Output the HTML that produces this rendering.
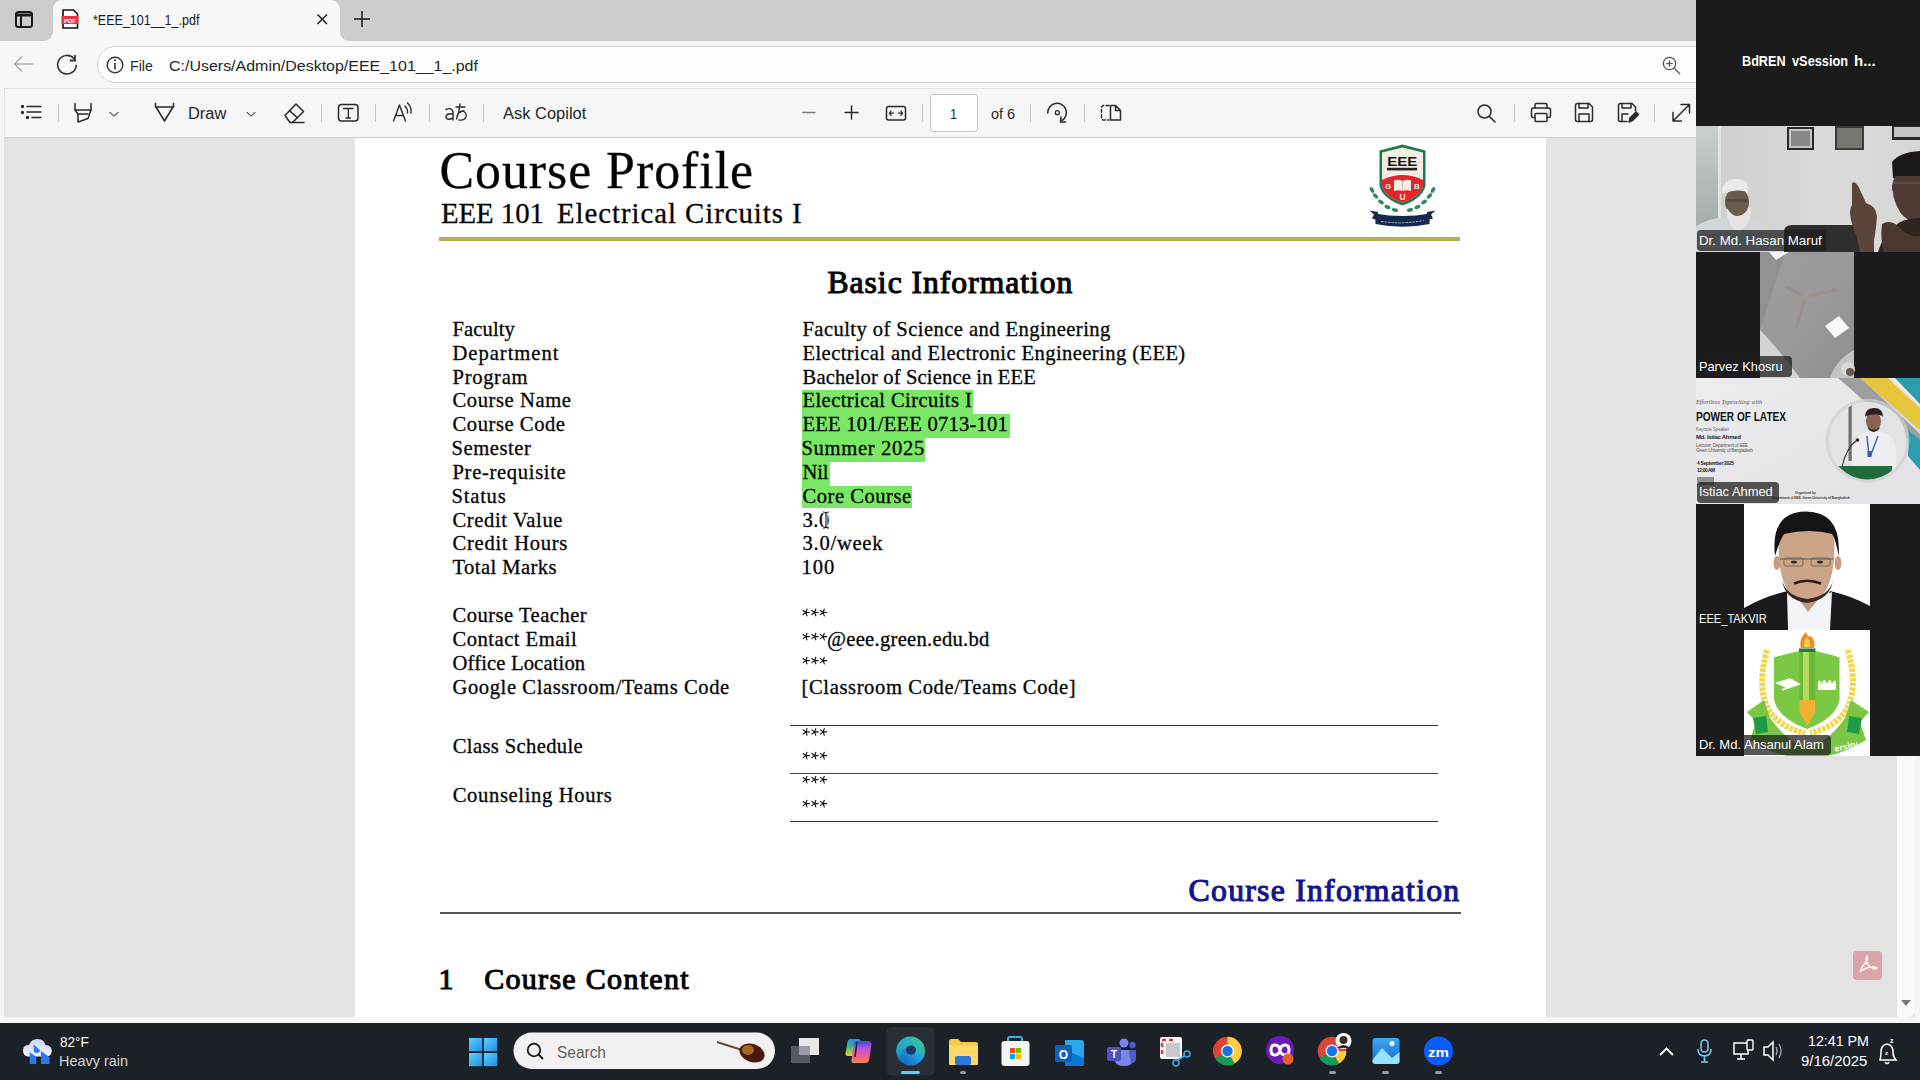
<!DOCTYPE html>
<html><head><meta charset="utf-8">
<style>
*{margin:0;padding:0;box-sizing:border-box}
html,body{width:1920px;height:1080px;overflow:hidden;background:#e3e3e3;font-family:"Liberation Sans",sans-serif}
.a{position:absolute}
.t{position:absolute;line-height:1;white-space:pre}
.ui{position:absolute;line-height:1;white-space:pre;font-family:"Liberation Sans",sans-serif;color:#1c1c1c}
svg{position:absolute;overflow:visible}
#tabbar{left:0;top:0;width:1920px;height:41px;background:#cdcdcd}
#tab{left:53px;top:0;width:287px;height:41px;background:#f7f7f7;border-radius:9px 9px 0 0}
#addr{left:0;top:41px;width:1920px;height:48px;background:#f7f7f7}
#pill{left:97px;top:46px;width:1640px;height:37px;background:#fdfdfd;border:1px solid #d4d4d4;border-radius:19px}
#tool{left:4px;top:88px;width:1916px;height:50px;background:#f6f6f6;border-top:1px solid #e4e4e4;border-left:1px solid #e4e4e4;border-bottom:1px solid #cfcfcf}
#page{left:355px;top:138px;width:1191px;height:879px;background:#fff}
#lframe{left:0;top:88px;width:4px;height:934px;background:#f4f4f4}
#bframe{left:0;top:1017px;width:1920px;height:6px;background:#f6f6f6}
#scroll{left:1897px;top:138px;width:18px;height:879px;background:#f8f8f8;border-radius:0 0 6px 0}
#rframe{left:1915px;top:88px;width:5px;height:934px;background:#f4f4f4}
#taskbar{left:0;top:1023px;width:1920px;height:57px;background:#1c2128}
#zoom{left:1696px;top:0;width:224px;height:756px;background:#1b1b1b}
.hl{position:absolute;background:#7ae866}
.sep{position:absolute;width:1px;height:18px;background:#c9c9c9}
</style></head><body>
<div id="tabbar" class="a"></div>
<div id="addr" class="a"></div>
<div id="pill" class="a"></div>
<div id="lframe" class="a"></div>
<div id="tool" class="a"></div>
<div id="page" class="a"></div>
<div id="scroll" class="a"></div>
<div id="rframe" class="a"></div>
<div id="bframe" class="a"></div>


<!-- tabstrip shapes -->
<div class="a" style="left:40px;top:28px;width:315px;height:13px;background:#f7f7f7"></div>
<div class="a" style="left:0;top:0;width:53px;height:41px;background:#cdcdcd;border-radius:0 0 9px 0"></div>
<div class="a" style="left:340px;top:0;width:1356px;height:41px;background:#cdcdcd;border-radius:0 0 0 9px"></div>
<div class="a" style="left:53px;top:0;width:287px;height:41px;background:#f7f7f7;border-radius:9px 9px 0 0"></div>
<svg class="chrome" width="1920" height="1080" style="left:0;top:0" viewBox="0 0 1920 1080">
 <g fill="none" stroke="#1a1a1a" stroke-width="2">
  <!-- tab actions -->
  <rect x="16" y="12" width="16" height="15" rx="2.5"/>
  <line x1="16" y1="15" x2="32" y2="15" stroke-width="3"/>
  <line x1="21" y1="15" x2="21" y2="27"/>
 </g>
 <!-- pdf file icon -->
 <path d="M63 10 H73.5 L77.5 14 V28 H63 Z" fill="#fff" stroke="#111" stroke-width="1.6"/>
 <rect x="61.5" y="16" width="17" height="8" fill="#e8353b"/>
 <text x="70" y="22.6" font-family="Liberation Sans" font-weight="700" font-size="6" fill="#fff" text-anchor="middle">PDF</text>
 <!-- close X -->
 <g stroke="#222" stroke-width="1.6" fill="none">
  <line x1="317.5" y1="14.5" x2="327" y2="24"/><line x1="327" y1="14.5" x2="317.5" y2="24"/>
 </g>
 <!-- plus -->
 <g stroke="#222" stroke-width="1.6" fill="none">
  <line x1="362" y1="11" x2="362" y2="27"/><line x1="354" y1="19" x2="370" y2="19"/>
 </g>
 <!-- back arrow -->
 <g stroke="#a8a8a8" stroke-width="1.4" fill="none">
  <line x1="14.5" y1="64" x2="33.5" y2="64"/><polyline points="22,56.5 14.5,64 22,71.5"/>
 </g>
 <!-- reload -->
 <g stroke="#333" stroke-width="1.6" fill="none">
  <path d="M76.3 64.7 A9.3 9.3 0 1 1 74.1 58.7"/>
  <polyline points="75,55 75,60.5 69.8,60.5" stroke-width="1.8"/>
 </g>
 <!-- info -->
 <circle cx="115" cy="65" r="7.8" fill="none" stroke="#333" stroke-width="1.4"/>
 <line x1="115" y1="63" x2="115" y2="69.5" stroke="#333" stroke-width="1.6"/>
 <circle cx="115" cy="60.3" r="1" fill="#333"/>
 <!-- zoom in address bar -->
 <g stroke="#555" stroke-width="1.3" fill="none">
  <circle cx="1669.5" cy="63.5" r="6.2"/><line x1="1674" y1="68" x2="1680" y2="74"/>
  <line x1="1669.5" y1="60.3" x2="1669.5" y2="66.7"/><line x1="1666.3" y1="63.5" x2="1672.7" y2="63.5"/>
 </g>
 <!-- toolbar icons -->
 <g stroke="#2a2a2a" stroke-width="1.5" fill="none" stroke-linecap="round" stroke-linejoin="round">
  <!-- list -->
  <circle cx="22.5" cy="106.5" r="0.9" fill="#2a2a2a"/><circle cx="22.5" cy="112.5" r="0.9" fill="#2a2a2a"/><circle cx="27.5" cy="117.5" r="0.9" fill="#2a2a2a"/>
  <line x1="27" y1="106.5" x2="41" y2="106.5"/><line x1="27" y1="112" x2="41" y2="112"/><line x1="32" y1="117.5" x2="41" y2="117.5"/>
  <!-- highlighter -->
  <path d="M75 103.5 V110 H91 V103.5"/><path d="M75 110 L78 114 V122 L88 118.5 L91 110"/><line x1="78" y1="114" x2="88" y2="114"/>
  <polyline points="110,112.5 114,116 118,112.5" stroke="#666" stroke-width="1.2"/>
  <!-- draw pen -->
  <path d="M155.5 103.5 V107 H173.5 V103.5"/><path d="M156 107 L164.5 121 L173 107"/>
  <polyline points="247,112.5 251,116 255,112.5" stroke="#666" stroke-width="1.2"/>
  <!-- eraser -->
  <path d="M285 115.5 L296 104 L303.5 111.5 L292.5 122.5 H290 Z"/><line x1="289.5" y1="110.5" x2="297.5" y2="118"/><line x1="292" y1="122.5" x2="304" y2="122.5"/>
  <!-- T box -->
  <rect x="338.5" y="104.5" width="19.5" height="16.5" rx="3"/>
  <path d="M343.5 108.5 H353 M348.3 108.5 V118 M346 118 H350.5" stroke-width="1.3"/>
  <!-- read aloud -->
  <path d="M393.5 121 L399.5 105 L405.5 121 M395.8 115.5 H403.2" stroke-width="1.4"/>
  <path d="M405 106 Q408 109 407.5 113" stroke-width="1.3"/><path d="M407.5 103 Q412 107.5 411 113" stroke-width="1.3"/>
  <!-- translate -->
  <path d="M446 109.5 Q452 107 453 112 V120 M453 114 Q446 113 446 117 Q447 121 453 118" stroke-width="1.4"/>
  <path d="M456 107 H465 M460 104 Q459 113 456.5 119 M463 111 Q467 113 466 117 Q464 121 459 120 M457 116 Q459 111 464 111" stroke-width="1.3"/>
  <!-- minus -->
  <line x1="803" y1="112.5" x2="815" y2="112.5" stroke="#777"/>
  <!-- plus -->
  <line x1="845" y1="112.5" x2="858" y2="112.5"/><line x1="851.5" y1="106" x2="851.5" y2="119"/>
  <!-- fit width -->
  <rect x="886.5" y="106.5" width="19" height="13.5" rx="2"/>
  <path d="M889.5 113.2 H893.5 M891 111 L889.5 113.2 L891 115.4 M898.5 113.2 H902.5 M901 111 L902.5 113.2 L901 115.4" stroke-width="1.3"/>
  <!-- rotate -->
  <path d="M1047.8 113 A9.3 9.3 0 1 1 1062 120.5" stroke-width="1.5"/>
  <path d="M1061 117 L1060.5 122 L1065.5 122" stroke-width="1.6"/>
  <circle cx="1057.3" cy="112.7" r="2" stroke-width="1.3"/>
  <!-- two page -->
  <path d="M1109 105.5 H1104 Q1101.5 105.5 1101.5 108 V117.5 Q1101.5 120 1104 120 H1109" stroke-dasharray="3 2.2" stroke-width="1.4"/>
  <path d="M1110.5 105.5 H1115.5 L1120.5 110.5 V120 H1110.5 Z M1115.5 105.5 V110.5 H1120.5" stroke-width="1.5"/>
  <!-- search -->
  <circle cx="1484.5" cy="111.5" r="6.5"/><line x1="1489.5" y1="116.5" x2="1495" y2="122"/>
  <!-- print -->
  <path d="M1535 108 V105 Q1535 103.5 1536.5 103.5 H1545.5 Q1547 103.5 1547 105 V108"/>
  <path d="M1535 117.5 H1533.5 Q1531.5 117.5 1531.5 115.5 V110 Q1531.5 108 1533.5 108 H1548.5 Q1550.5 108 1550.5 110 V115.5 Q1550.5 117.5 1548.5 117.5 H1547"/>
  <rect x="1535" y="113.5" width="12" height="8" rx="1"/>
  <!-- save -->
  <path d="M1575.5 105.5 Q1575.5 103.5 1577.5 103.5 H1589 L1592.5 107 V119.5 Q1592.5 121.5 1590.5 121.5 H1577.5 Q1575.5 121.5 1575.5 119.5 Z"/>
  <path d="M1579 103.5 V108 H1588 V103.5 M1579 121.5 V114 H1589 V121.5"/>
  <!-- save as -->
  <path d="M1627 121.5 H1620.5 Q1618.5 121.5 1618.5 119.5 V105.5 Q1618.5 103.5 1620.5 103.5 H1632 L1635.5 107 V111"/>
  <path d="M1622 103.5 V108 H1631 V103.5 M1622 121.5 V114 H1628"/>
  <path d="M1629 122 L1630 118 L1636 112 L1638.5 114.5 L1632.5 120.5 Z" fill="#2a2a2a"/>
  <!-- fullscreen -->
  <path d="M1673 121 L1689.5 104.5 M1681 104.5 H1689.5 V113 M1673 112.5 V121 H1681.5"/>
 </g>
 <!-- separators -->
 <g stroke="#c6c6c6" stroke-width="1">
  <line x1="58.5" y1="104" x2="58.5" y2="122"/><line x1="321.5" y1="104" x2="321.5" y2="122"/>
  <line x1="375.5" y1="104" x2="375.5" y2="122"/><line x1="429.5" y1="104" x2="429.5" y2="122"/>
  <line x1="483.5" y1="104" x2="483.5" y2="122"/><line x1="922.5" y1="104" x2="922.5" y2="122"/>
  <line x1="1030.5" y1="104" x2="1030.5" y2="122"/><line x1="1084.5" y1="104" x2="1084.5" y2="122"/>
  <line x1="1514.5" y1="104" x2="1514.5" y2="122"/><line x1="1654.5" y1="104" x2="1654.5" y2="122"/>
 </g>
</svg>
<!-- page number box -->
<div class="a" style="left:930px;top:94px;width:48px;height:38px;background:#fff;border:1px solid #c9c9c9;border-radius:3px"></div>
<div class="t" style="left:92.5px;top:11.5px;font:400 15.2px 'Liberation Sans',sans-serif;line-height:1;transform:scaleX(0.8232);transform-origin:0 0;color:#1a1a1a">*EEE_101__1_.pdf</div>
<div class="t" style="left:129.6px;top:57.5px;font:400 15.2px 'Liberation Sans',sans-serif;line-height:1;transform:scaleX(0.9337);transform-origin:0 0;color:#2b2b2b">File</div>
<div class="t" style="left:169.3px;top:57.5px;font:400 15.4px 'Liberation Sans',sans-serif;line-height:1;transform:scaleX(1.0377);transform-origin:0 0;color:#262626">C:/Users/Admin/Desktop/EEE_101__1_.pdf</div>
<div class="t" style="left:187.9px;top:105.8px;font:400 15.6px 'Liberation Sans',sans-serif;line-height:1;transform:scaleX(1.0519);transform-origin:0 0;color:#262626">Draw</div>
<div class="t" style="left:503.0px;top:105.8px;font:400 15.6px 'Liberation Sans',sans-serif;line-height:1;transform:scaleX(1.0561);transform-origin:0 0;color:#262626">Ask Copilot</div>
<div class="t" style="left:950.1px;top:106.6px;font:400 14.6px 'Liberation Sans',sans-serif;line-height:1;transform:scaleX(0.8571);transform-origin:0 0;color:#262626">1</div>
<div class="t" style="left:991.0px;top:106.6px;font:400 14.6px 'Liberation Sans',sans-serif;line-height:1;transform:scaleX(0.9907);transform-origin:0 0;color:#262626">of 6</div>

<!-- highlights -->
<div class="hl" style="left:802px;top:390px;width:171px;height:24px"></div>
<div class="hl" style="left:802px;top:414px;width:208px;height:24px"></div>
<div class="hl" style="left:802px;top:438px;width:123px;height:24px"></div>
<div class="hl" style="left:802px;top:462px;width:28px;height:24px"></div>
<div class="hl" style="left:802px;top:486px;width:110px;height:22px"></div>

<!-- page lines -->
<div class="a" style="left:439px;top:237px;width:1021px;height:4px;background:#b9ad55"></div>
<div class="a" style="left:790px;top:725px;width:648px;height:1.3px;background:#333"></div>
<div class="a" style="left:790px;top:772.5px;width:648px;height:1px;background:#444"></div>
<div class="a" style="left:790px;top:820.5px;width:648px;height:1.3px;background:#333"></div>
<div class="a" style="left:440px;top:912px;width:1021px;height:1.5px;background:#555"></div>

<div class="t" style="left:439.5px;top:145.1px;font:400 51.8px 'Liberation Serif',serif;line-height:1;letter-spacing:0.99px;color:#050505;-webkit-text-stroke:0.3px #050505">Course Profile</div>
<div class="t" style="left:441.0px;top:198.8px;font:400 28.8px 'Liberation Serif',serif;line-height:1;letter-spacing:-0.04px;color:#050505;-webkit-text-stroke:0.3px #050505">EEE 101</div>
<div class="t" style="left:557.0px;top:198.8px;font:400 28.8px 'Liberation Serif',serif;line-height:1;letter-spacing:0.96px;color:#050505;-webkit-text-stroke:0.3px #050505">Electrical Circuits I</div>
<div class="t" style="left:827.5px;top:266.8px;font:401 31.6px 'Liberation Serif',serif;line-height:1;letter-spacing:0.99px;color:#050505;-webkit-text-stroke:1.1px #050505">Basic Information</div>
<div class="t" style="left:452.5px;top:318.8px;font:400 20.6px 'Liberation Serif',serif;line-height:1;letter-spacing:0.09px;color:#050505;-webkit-text-stroke:0.3px #050505">Faculty</div>
<div class="t" style="left:452.5px;top:342.6px;font:400 20.6px 'Liberation Serif',serif;line-height:1;letter-spacing:0.97px;color:#050505;-webkit-text-stroke:0.3px #050505">Department</div>
<div class="t" style="left:452.5px;top:366.5px;font:400 20.6px 'Liberation Serif',serif;line-height:1;letter-spacing:0.68px;color:#050505;-webkit-text-stroke:0.3px #050505">Program</div>
<div class="t" style="left:452.5px;top:390.3px;font:400 20.6px 'Liberation Serif',serif;line-height:1;letter-spacing:0.57px;color:#050505;-webkit-text-stroke:0.3px #050505">Course Name</div>
<div class="t" style="left:452.5px;top:414.2px;font:400 20.6px 'Liberation Serif',serif;line-height:1;letter-spacing:0.55px;color:#050505;-webkit-text-stroke:0.3px #050505">Course Code</div>
<div class="t" style="left:451.5px;top:438.0px;font:400 20.6px 'Liberation Serif',serif;line-height:1;letter-spacing:0.55px;color:#050505;-webkit-text-stroke:0.3px #050505">Semester</div>
<div class="t" style="left:452.5px;top:461.9px;font:400 20.6px 'Liberation Serif',serif;line-height:1;letter-spacing:0.67px;color:#050505;-webkit-text-stroke:0.3px #050505">Pre-requisite</div>
<div class="t" style="left:451.5px;top:485.7px;font:400 20.6px 'Liberation Serif',serif;line-height:1;letter-spacing:0.77px;color:#050505;-webkit-text-stroke:0.3px #050505">Status</div>
<div class="t" style="left:452.5px;top:509.6px;font:400 20.6px 'Liberation Serif',serif;line-height:1;letter-spacing:0.62px;color:#050505;-webkit-text-stroke:0.3px #050505">Credit Value</div>
<div class="t" style="left:452.5px;top:533.4px;font:400 20.6px 'Liberation Serif',serif;line-height:1;letter-spacing:0.72px;color:#050505;-webkit-text-stroke:0.3px #050505">Credit Hours</div>
<div class="t" style="left:452.5px;top:557.3px;font:400 20.6px 'Liberation Serif',serif;line-height:1;letter-spacing:0.42px;color:#050505;-webkit-text-stroke:0.3px #050505">Total Marks</div>
<div class="t" style="left:802.5px;top:318.8px;font:400 20.6px 'Liberation Serif',serif;line-height:1;letter-spacing:0.42px;color:#050505;-webkit-text-stroke:0.3px #050505">Faculty of Science and Engineering</div>
<div class="t" style="left:802.5px;top:342.6px;font:400 20.6px 'Liberation Serif',serif;line-height:1;letter-spacing:0.40px;color:#050505;-webkit-text-stroke:0.3px #050505">Electrical and Electronic Engineering (EEE)</div>
<div class="t" style="left:802.5px;top:366.5px;font:400 20.6px 'Liberation Serif',serif;line-height:1;letter-spacing:0.14px;color:#050505;-webkit-text-stroke:0.3px #050505">Bachelor of Science in EEE</div>
<div class="t" style="left:802.5px;top:390.3px;font:400 20.6px 'Liberation Serif',serif;line-height:1;letter-spacing:0.40px;color:#050505;-webkit-text-stroke:0.3px #050505">Electrical Circuits I</div>
<div class="t" style="left:802.5px;top:414.2px;font:400 20.6px 'Liberation Serif',serif;line-height:1;letter-spacing:0.21px;color:#050505;-webkit-text-stroke:0.3px #050505">EEE 101/EEE 0713-101</div>
<div class="t" style="left:801.5px;top:438.0px;font:400 20.6px 'Liberation Serif',serif;line-height:1;letter-spacing:0.67px;color:#050505;-webkit-text-stroke:0.3px #050505">Summer 2025</div>
<div class="t" style="left:802.5px;top:461.9px;font:400 20.6px 'Liberation Serif',serif;line-height:1;letter-spacing:-0.20px;color:#050505;-webkit-text-stroke:0.3px #050505">Nil</div>
<div class="t" style="left:802.5px;top:485.7px;font:400 20.6px 'Liberation Serif',serif;line-height:1;letter-spacing:0.51px;color:#050505;-webkit-text-stroke:0.3px #050505">Core Course</div>
<div class="t" style="left:802.5px;top:509.6px;font:400 20.6px 'Liberation Serif',serif;line-height:1;letter-spacing:0.53px;color:#050505;-webkit-text-stroke:0.3px #050505">3.0</div>
<div class="t" style="left:802.5px;top:533.4px;font:400 20.6px 'Liberation Serif',serif;line-height:1;letter-spacing:0.73px;color:#050505;-webkit-text-stroke:0.3px #050505">3.0/week</div>
<div class="t" style="left:801.5px;top:557.3px;font:400 20.6px 'Liberation Serif',serif;line-height:1;letter-spacing:0.95px;color:#050505;-webkit-text-stroke:0.3px #050505">100</div>
<div class="t" style="left:452.5px;top:605.0px;font:400 20.6px 'Liberation Serif',serif;line-height:1;letter-spacing:0.48px;color:#050505;-webkit-text-stroke:0.3px #050505">Course Teacher</div>
<div class="t" style="left:452.5px;top:628.8px;font:400 20.6px 'Liberation Serif',serif;line-height:1;letter-spacing:0.49px;color:#050505;-webkit-text-stroke:0.3px #050505">Contact Email</div>
<div class="t" style="left:452.5px;top:652.7px;font:400 20.6px 'Liberation Serif',serif;line-height:1;letter-spacing:0.15px;color:#050505;-webkit-text-stroke:0.3px #050505">Office Location</div>
<div class="t" style="left:452.5px;top:676.5px;font:400 20.6px 'Liberation Serif',serif;line-height:1;letter-spacing:0.58px;color:#050505;-webkit-text-stroke:0.3px #050505">Google Classroom/Teams Code</div>
<div class="t" style="left:827.0px;top:628.8px;font:400 20.6px 'Liberation Serif',serif;line-height:1;letter-spacing:0.28px;color:#050505;-webkit-text-stroke:0.3px #050505">@eee.green.edu.bd</div>
<div class="t" style="left:801.5px;top:676.5px;font:400 20.6px 'Liberation Serif',serif;line-height:1;letter-spacing:0.61px;color:#050505;-webkit-text-stroke:0.3px #050505">[Classroom Code/Teams Code]</div>
<div class="t" style="left:452.7px;top:736.4px;font:400 20.6px 'Liberation Serif',serif;line-height:1;letter-spacing:0.37px;color:#050505;-webkit-text-stroke:0.3px #050505">Class Schedule</div>
<div class="t" style="left:452.7px;top:784.5px;font:400 20.6px 'Liberation Serif',serif;line-height:1;letter-spacing:0.65px;color:#050505;-webkit-text-stroke:0.3px #050505">Counseling Hours</div>
<div class="t" style="left:1188.6px;top:874.9px;font:401 31.8px 'Liberation Serif',serif;line-height:1;letter-spacing:1.22px;color:#14148c;-webkit-text-stroke:1.1px #14148c">Course Information</div>
<div class="t" style="left:438.6px;top:964.2px;font:401 30px 'Liberation Serif',serif;line-height:1;letter-spacing:0.00px;color:#050505;-webkit-text-stroke:1.1px #050505">1</div>
<div class="t" style="left:484.2px;top:964.2px;font:401 30px 'Liberation Serif',serif;line-height:1;letter-spacing:1.30px;color:#050505;-webkit-text-stroke:1.1px #050505">Course Content</div><svg width="1920" height="1080" style="left:0;top:0" viewBox="0 0 1920 1080"><path d="M805.90 612.50 L809.40 612.50 M805.90 612.50 L806.98 615.83 M805.90 612.50 L803.07 614.56 M805.90 612.50 L803.07 610.44 M805.90 612.50 L806.98 609.17 M814.70 612.50 L818.20 612.50 M814.70 612.50 L815.78 615.83 M814.70 612.50 L811.87 614.56 M814.70 612.50 L811.87 610.44 M814.70 612.50 L815.78 609.17 M823.20 612.50 L826.70 612.50 M823.20 612.50 L824.28 615.83 M823.20 612.50 L820.37 614.56 M823.20 612.50 L820.37 610.44 M823.20 612.50 L824.28 609.17 M805.90 636.60 L809.40 636.60 M805.90 636.60 L806.98 639.93 M805.90 636.60 L803.07 638.66 M805.90 636.60 L803.07 634.54 M805.90 636.60 L806.98 633.27 M814.70 636.60 L818.20 636.60 M814.70 636.60 L815.78 639.93 M814.70 636.60 L811.87 638.66 M814.70 636.60 L811.87 634.54 M814.70 636.60 L815.78 633.27 M823.20 636.60 L826.70 636.60 M823.20 636.60 L824.28 639.93 M823.20 636.60 L820.37 638.66 M823.20 636.60 L820.37 634.54 M823.20 636.60 L824.28 633.27 M805.90 660.60 L809.40 660.60 M805.90 660.60 L806.98 663.93 M805.90 660.60 L803.07 662.66 M805.90 660.60 L803.07 658.54 M805.90 660.60 L806.98 657.27 M814.70 660.60 L818.20 660.60 M814.70 660.60 L815.78 663.93 M814.70 660.60 L811.87 662.66 M814.70 660.60 L811.87 658.54 M814.70 660.60 L815.78 657.27 M823.20 660.60 L826.70 660.60 M823.20 660.60 L824.28 663.93 M823.20 660.60 L820.37 662.66 M823.20 660.60 L820.37 658.54 M823.20 660.60 L824.28 657.27 M805.90 731.90 L809.40 731.90 M805.90 731.90 L806.98 735.23 M805.90 731.90 L803.07 733.96 M805.90 731.90 L803.07 729.84 M805.90 731.90 L806.98 728.57 M814.70 731.90 L818.20 731.90 M814.70 731.90 L815.78 735.23 M814.70 731.90 L811.87 733.96 M814.70 731.90 L811.87 729.84 M814.70 731.90 L815.78 728.57 M823.20 731.90 L826.70 731.90 M823.20 731.90 L824.28 735.23 M823.20 731.90 L820.37 733.96 M823.20 731.90 L820.37 729.84 M823.20 731.90 L824.28 728.57 M805.90 755.60 L809.40 755.60 M805.90 755.60 L806.98 758.93 M805.90 755.60 L803.07 757.66 M805.90 755.60 L803.07 753.54 M805.90 755.60 L806.98 752.27 M814.70 755.60 L818.20 755.60 M814.70 755.60 L815.78 758.93 M814.70 755.60 L811.87 757.66 M814.70 755.60 L811.87 753.54 M814.70 755.60 L815.78 752.27 M823.20 755.60 L826.70 755.60 M823.20 755.60 L824.28 758.93 M823.20 755.60 L820.37 757.66 M823.20 755.60 L820.37 753.54 M823.20 755.60 L824.28 752.27 M805.90 779.60 L809.40 779.60 M805.90 779.60 L806.98 782.93 M805.90 779.60 L803.07 781.66 M805.90 779.60 L803.07 777.54 M805.90 779.60 L806.98 776.27 M814.70 779.60 L818.20 779.60 M814.70 779.60 L815.78 782.93 M814.70 779.60 L811.87 781.66 M814.70 779.60 L811.87 777.54 M814.70 779.60 L815.78 776.27 M823.20 779.60 L826.70 779.60 M823.20 779.60 L824.28 782.93 M823.20 779.60 L820.37 781.66 M823.20 779.60 L820.37 777.54 M823.20 779.60 L824.28 776.27 M805.90 803.60 L809.40 803.60 M805.90 803.60 L806.98 806.93 M805.90 803.60 L803.07 805.66 M805.90 803.60 L803.07 801.54 M805.90 803.60 L806.98 800.27 M814.70 803.60 L818.20 803.60 M814.70 803.60 L815.78 806.93 M814.70 803.60 L811.87 805.66 M814.70 803.60 L811.87 801.54 M814.70 803.60 L815.78 800.27 M823.20 803.60 L826.70 803.60 M823.20 803.60 L824.28 806.93 M823.20 803.60 L820.37 805.66 M823.20 803.60 L820.37 801.54 M823.20 803.60 L824.28 800.27 " stroke="#111" stroke-width="1.15" stroke-linecap="round" fill="none"/></svg>


<!-- EEE logo -->
<svg width="86" height="94" style="left:1360px;top:138px" viewBox="1360 138 86 94">
 <path d="M1402.5 144.5 L1425.5 150.5 V186 Q1422 199 1402.5 205.5 Q1383 199 1379.5 186 V150.5 Z" fill="#1f7a4a"/>
 <path d="M1402.5 147.5 L1423 152.5 V185.5 Q1420 197 1402.5 202.5 Q1385 197 1382 185.5 V152.5 Z" fill="#f1ede2"/>
 <path d="M1382 180 Q1402.5 170 1423 180 V185.5 Q1420 197 1402.5 202.5 Q1385 197 1382 185.5 Z" fill="#e3262b"/>
 <text x="1402.3" y="166" font-family="Liberation Sans" font-weight="900" font-size="13.5" fill="#111" text-anchor="middle" textLength="30" lengthAdjust="spacingAndGlyphs">EEE</text>
 <rect x="1387" y="167.8" width="30" height="2.6" fill="#222"/>
 <path d="M1394 180.5 Q1398 179 1402.5 181 Q1407 179 1411 180.5 V191 Q1407 189.5 1402.5 191 Q1398 189.5 1394 191 Z" fill="#f4efe4"/>
 <line x1="1402.5" y1="181" x2="1402.5" y2="191" stroke="#c88" stroke-width="0.6"/>
 <text x="1388" y="188.5" font-family="Liberation Sans" font-weight="700" font-size="8" fill="#f4e8e0" text-anchor="middle">G</text>
 <text x="1416.8" y="188.5" font-family="Liberation Sans" font-weight="700" font-size="8" fill="#f4e8e0" text-anchor="middle">B</text>
 <text x="1402.5" y="199.5" font-family="Liberation Sans" font-weight="700" font-size="8.5" fill="#f4e8e0" text-anchor="middle">U</text>
 <g fill="#2e8a5a">
  <ellipse cx="1372" cy="190" rx="1.8" ry="3.2" transform="rotate(-30 1372 190)"/>
  <ellipse cx="1375.5" cy="196" rx="1.8" ry="3.2" transform="rotate(-45 1375.5 196)"/>
  <ellipse cx="1381" cy="202" rx="1.8" ry="3.2" transform="rotate(-55 1381 202)"/>
  <ellipse cx="1387.5" cy="207" rx="1.8" ry="3.2" transform="rotate(-65 1387.5 207)"/>
  <ellipse cx="1395" cy="210" rx="1.8" ry="3.2" transform="rotate(-75 1395 210)"/>
  <ellipse cx="1433" cy="190" rx="1.8" ry="3.2" transform="rotate(30 1433 190)"/>
  <ellipse cx="1429.5" cy="196" rx="1.8" ry="3.2" transform="rotate(45 1429.5 196)"/>
  <ellipse cx="1424" cy="202" rx="1.8" ry="3.2" transform="rotate(55 1424 202)"/>
  <ellipse cx="1417.5" cy="207" rx="1.8" ry="3.2" transform="rotate(65 1417.5 207)"/>
  <ellipse cx="1410" cy="210" rx="1.8" ry="3.2" transform="rotate(75 1410 210)"/>
 </g>
 <path d="M1369.5 210.5 L1378 212 L1377.5 220 L1372 218.5 L1374 214.5 Z M1435.5 210.5 L1427 212 L1427.5 220 L1433 218.5 L1431 214.5 Z" fill="#13284a"/>
 <path d="M1375 213.5 Q1402.5 218.5 1430 213.5 L1429.5 224 Q1402.5 229.5 1375.5 224 Z" fill="#14294b"/>
 <path d="M1381 221.5 Q1402 224.5 1424 220.5" stroke="#b8c2d2" stroke-width="0.9" fill="none" stroke-dasharray="2.5 1"/>
</svg>
<!-- text cursor -->
<svg width="12" height="20" style="left:820px;top:510px" viewBox="0 0 12 20">
 <path d="M3 2 Q6 2 6 4 V16 Q6 18 3 18 M9 2 Q6 2 6 4 M9 18 Q6 18 6 16" fill="none" stroke="#fff" stroke-width="3"/>
 <path d="M3 2 Q6 2 6 4 V16 Q6 18 3 18 M9 2 Q6 2 6 4 M9 18 Q6 18 6 16" fill="none" stroke="#111" stroke-width="1.1"/>
</svg>

<div id="taskbar" class="a"></div>

<svg width="1920" height="57" style="left:0;top:1023px" viewBox="0 1023 1920 57">
 <defs>
  <linearGradient id="winlogo" x1="0" y1="0" x2="1" y2="1"><stop offset="0" stop-color="#5fd0ff"/><stop offset="1" stop-color="#1a8ee6"/></linearGradient>
  <linearGradient id="edgeg" x1="1" y1="0" x2="0" y2="1"><stop offset="0" stop-color="#50d060"/><stop offset="0.45" stop-color="#20a0e0"/><stop offset="1" stop-color="#1050b0"/></linearGradient>
  <linearGradient id="copg" x1="0" y1="0" x2="1" y2="1"><stop offset="0" stop-color="#2ec0f0"/><stop offset="0.35" stop-color="#f0d040"/><stop offset="0.65" stop-color="#e8508a"/><stop offset="1" stop-color="#9a50e0"/></linearGradient>
  <linearGradient id="photog" x1="0" y1="0" x2="0" y2="1"><stop offset="0" stop-color="#3aa8f0"/><stop offset="1" stop-color="#1a6ad0"/></linearGradient>
  <linearGradient id="cloudg" x1="0" y1="0" x2="0" y2="1"><stop offset="0" stop-color="#c8d4f8"/><stop offset="1" stop-color="#f2f0fa"/></linearGradient>
 </defs>
 <!-- weather -->
 <path d="M28 1056.5 Q23 1056 23 1050.5 Q23 1045 29 1045 Q31 1039 37.5 1039 Q44 1039 45.5 1045 Q51.8 1045.5 51.8 1051 Q51.5 1056.5 46 1056.5 Z" fill="url(#cloudg)"/>
 <path d="M33.7 1044.5 L39.8 1050 Q40 1053 36.8 1053 Q33.7 1053 33.7 1050 Z" fill="#2a7af0"/>
 <path d="M29.7 1052 L36.3 1057 V1064 H29.7 Z" fill="#2c78f0"/>
 <path d="M41 1051 L49.5 1057 V1064 H41 Z" fill="#2c78f0"/>
 <!-- windows logo -->
 <rect x="469" y="1038" width="13.2" height="13.2" fill="url(#winlogo)"/>
 <rect x="484" y="1038" width="13.2" height="13.2" fill="url(#winlogo)"/>
 <rect x="469" y="1053" width="13.2" height="13.2" fill="url(#winlogo)"/>
 <rect x="484" y="1053" width="13.2" height="13.2" fill="url(#winlogo)"/>
 <!-- search pill -->
 <rect x="513.5" y="1032.5" width="261.5" height="36.5" rx="18.2" fill="#f1f1f1"/>
 <circle cx="534" cy="1050" r="6.3" fill="none" stroke="#1c1c1c" stroke-width="1.8"/>
 <line x1="538.5" y1="1054.5" x2="543" y2="1059" stroke="#1c1c1c" stroke-width="2"/>
 <!-- guitar -->
 <line x1="717" y1="1042" x2="742" y2="1050" stroke="#6a4a2a" stroke-width="2.2"/>
 <ellipse cx="752" cy="1053" rx="13" ry="9" fill="#4a1a10" transform="rotate(20 752 1053)"/>
 <ellipse cx="748" cy="1050" rx="6" ry="5" fill="#a8661a"/>
 <!-- task view -->
 <rect x="791" y="1046" width="19" height="17" fill="#555a60"/>
 <rect x="799" y="1038" width="20" height="17" fill="#e8e8ea"/>
 <rect x="799" y="1046" width="11" height="9" fill="#9a9ea4"/>
 <!-- copilot -->
 <linearGradient id="copL" x1="0" y1="0" x2="0" y2="1"><stop offset="0" stop-color="#2a8af0"/><stop offset="0.5" stop-color="#40c070"/><stop offset="1" stop-color="#f0d020"/></linearGradient>
 <linearGradient id="copR" x1="0" y1="0" x2="0" y2="1"><stop offset="0" stop-color="#3050e0"/><stop offset="0.35" stop-color="#c050e0"/><stop offset="0.7" stop-color="#f05a90"/><stop offset="1" stop-color="#f88a40"/></linearGradient>
 <path d="M850 1039 H858 Q861 1039 860.5 1042 L857.5 1054 Q857 1056 854 1056 H848 Q845 1056 845.5 1053 L847.5 1042 Q848 1039 850 1039 Z" fill="url(#copL)"/>
 <path d="M856 1041 H868 Q872 1041 871.5 1045 L869 1060 Q868.5 1063 865 1063 H853 Q851 1063 851.5 1060 L853.5 1045 Q854 1041 856 1041 Z" fill="url(#copR)"/>
 <path d="M857 1042 L855 1057" stroke="#1c2128" stroke-width="1.5"/>
 <!-- edge active bg -->
 <rect x="886.5" y="1027" width="48" height="48.5" rx="5" fill="#2a2f36"/>
 <circle cx="910.5" cy="1051" r="14.5" fill="url(#edgeg)"/>
 <path d="M896 1051 Q897 1040 908 1038 Q920 1037 924.5 1046 Q925 1053 918 1054 Q912 1054 911 1049 Q907 1045 902 1050 Q898 1056 904 1062 Q900 1060 896 1051 Z" fill="#30c0b0" opacity="0.55"/>
 <ellipse cx="911" cy="1050" rx="5" ry="4.5" fill="#1c3a5a"/>
 <rect x="901" y="1071" width="19" height="3" rx="1.5" fill="#60c8ff"/>
 <!-- explorer -->
 <path d="M949 1041 Q949 1039 951 1039 H958 L961 1042 H976 Q978 1042 978 1044 V1063 Q978 1065 976 1065 H951 Q949 1065 949 1063 Z" fill="#f4c84a"/>
 <rect x="949" y="1045" width="29" height="20" rx="1.5" fill="#ffd866"/>
 <rect x="955" y="1056" width="16" height="9" rx="2" fill="#2a78d8"/>
 <rect x="960" y="1071" width="6" height="3" rx="1.5" fill="#9a9a9a"/>
 <!-- store -->
 <path d="M1008 1042 V1039 Q1008 1037 1010 1037 H1020 Q1022 1037 1022 1039 V1042" fill="none" stroke="#40b0e8" stroke-width="2"/>
 <rect x="1001.5" y="1041" width="28" height="25" rx="3" fill="#f4f4f6"/>
 <rect x="1010" y="1048" width="5" height="5" fill="#f25022"/><rect x="1016" y="1048" width="5" height="5" fill="#7fba00"/>
 <rect x="1010" y="1054" width="5" height="5" fill="#00a4ef"/><rect x="1016" y="1054" width="5" height="5" fill="#ffb900"/>
 <!-- outlook -->
 <path d="M1065 1040 H1081 Q1084 1040 1084 1043 V1063 Q1084 1066 1081 1066 H1065 Z" fill="#28a8ea"/>
 <path d="M1065 1050 L1084 1058 V1063 Q1084 1066 1081 1066 H1065 Z" fill="#0a78d4"/>
 <rect x="1055" y="1045" width="17" height="17" rx="2" fill="#0f60b8"/>
 <text x="1063.5" y="1058.5" font-family="Liberation Sans" font-weight="700" font-size="12" fill="#fff" text-anchor="middle">O</text>
 <!-- teams -->
 <circle cx="1124" cy="1043" r="4.5" fill="#7b83eb"/><circle cx="1132.5" cy="1045" r="3.2" fill="#5059c9"/>
 <path d="M1115 1050 H1131 Q1133 1050 1133 1052 V1060 Q1133 1066 1124 1066 Q1115 1066 1115 1060 Z" fill="#7b83eb"/>
 <path d="M1129 1050 H1136 V1059 Q1136 1063 1131 1063 Z" fill="#5059c9"/>
 <rect x="1107" y="1047" width="14" height="14" rx="2" fill="#4b53bc"/>
 <text x="1114" y="1058" font-family="Liberation Sans" font-weight="700" font-size="10" fill="#fff" text-anchor="middle">T</text>
 <!-- snipping -->
 <rect x="1160" y="1037" width="22" height="22" rx="2" fill="#f6f6f6"/>
 <path d="M1162 1040 H1166 M1169 1040 H1173 M1162 1043 V1047 M1162 1050 V1054" stroke="#d83a3a" stroke-width="2.4"/>
 <rect x="1166" y="1043" width="14" height="14" fill="#c8c8cc"/>
 <circle cx="1176" cy="1063" r="3" fill="none" stroke="#40a8e8" stroke-width="1.6"/>
 <circle cx="1187" cy="1054" r="3" fill="none" stroke="#40a8e8" stroke-width="1.6"/>
 <line x1="1178" y1="1060" x2="1184" y2="1056" stroke="#40a8e8" stroke-width="1.6"/>
 <!-- chrome -->
 <circle cx="1227.5" cy="1051" r="14.3" fill="#db4437"/>
 <path d="M1227.5 1051 L1215.1 1058.15 A14.3 14.3 0 0 0 1234.65 1063.4 Z" fill="#0f9d58"/>
 <path d="M1227.5 1051 L1241.8 1051 A14.3 14.3 0 0 1 1234.65 1063.4 L1227.5 1051 Z" fill="#ffcd40"/>
 <path d="M1227.5 1051 L1227.5 1036.7 A14.3 14.3 0 0 1 1241.8 1051 Z" fill="#ffcd40"/>
 <path d="M1215.1 1058.15 A14.3 14.3 0 0 1 1215.1 1043.85 L1227.5 1051 Z" fill="#db4437"/>
 <circle cx="1227.5" cy="1051" r="6.5" fill="#fff"/><circle cx="1227.5" cy="1051" r="5.2" fill="#1a73e8"/>
 <!-- clipchamp-like -->
 <circle cx="1280" cy="1050" r="14" fill="#6a1ab8"/>
 <path d="M1271 1050 Q1271 1045 1275 1045 Q1279 1045 1280 1050 Q1281 1055 1285 1055 Q1289 1055 1289 1050 Q1289 1045 1285 1045 Q1281 1045 1280 1050 Q1279 1055 1275 1055 Q1271 1055 1271 1050 Z" fill="none" stroke="#fff" stroke-width="3"/>
 <circle cx="1288" cy="1059" r="5.5" fill="#e8602a"/>
 <!-- chrome profile -->
 <circle cx="1332" cy="1051" r="14.3" fill="#db4437"/>
 <path d="M1332 1051 L1319.6 1058.15 A14.3 14.3 0 0 0 1339.15 1063.4 Z" fill="#0f9d58"/>
 <path d="M1332 1051 L1346.3 1051 A14.3 14.3 0 0 1 1339.15 1063.4 Z" fill="#ffcd40"/>
 <circle cx="1332" cy="1051" r="6.5" fill="#fff"/><circle cx="1332" cy="1051" r="5.2" fill="#1a73e8"/>
 <circle cx="1343.5" cy="1041" r="8" fill="#fff"/>
 <circle cx="1343.5" cy="1040" r="4" fill="#3a2a22"/><path d="M1337 1048 Q1343.5 1042 1350 1048" fill="#2a2a2a"/>
 <rect x="1329" y="1071" width="7" height="3" rx="1.5" fill="#9a9a9a"/>
 <!-- photos -->
 <rect x="1372.5" y="1038" width="27" height="26" rx="3" fill="url(#photog)"/>
 <path d="M1372.5 1060 L1382 1048 L1392 1058 L1399.5 1052 V1061 Q1399.5 1064 1396.5 1064 H1375.5 Q1372.5 1064 1372.5 1061 Z" fill="#9ae0ff"/>
 <circle cx="1392" cy="1043.5" r="2.5" fill="#fff"/>
 <rect x="1382" y="1071" width="7" height="3" rx="1.5" fill="#9a9a9a"/>
 <!-- zoom -->
 <circle cx="1438.5" cy="1051" r="14.5" fill="#0b5cff"/>
 <text x="1438.5" y="1056.5" font-family="Liberation Sans" font-weight="700" font-size="13" fill="#fff" text-anchor="middle" textLength="21" lengthAdjust="spacingAndGlyphs">zm</text>
 <rect x="1435" y="1071" width="7" height="3" rx="1.5" fill="#9a9a9a"/>
 <!-- tray -->
 <polyline points="1660,1055 1666.5,1048.5 1673,1055" fill="none" stroke="#fff" stroke-width="1.8"/>
 <rect x="1701" y="1040" width="7" height="12" rx="3.5" fill="none" stroke="#7ac8f0" stroke-width="1.6"/>
 <path d="M1698 1049 Q1698 1056 1704.5 1056 Q1711 1056 1711 1049 M1704.5 1056 V1062 M1701 1062 H1708" fill="none" stroke="#7ac8f0" stroke-width="1.6"/>
 <rect x="1734" y="1043" width="14" height="11" fill="none" stroke="#fff" stroke-width="1.5"/>
 <path d="M1737 1059 H1745 M1741 1054 V1059" stroke="#fff" stroke-width="1.5"/>
 <rect x="1747" y="1040" width="6" height="10" rx="1" fill="#1c2128" stroke="#fff" stroke-width="1.4"/>
 <path d="M1764 1047 H1768 L1773 1042 V1060 L1768 1055 H1764 Z" fill="none" stroke="#fff" stroke-width="1.5"/>
 <path d="M1776 1047 Q1778 1051 1776 1055 M1779 1044 Q1783 1051 1779 1058" fill="none" stroke="#aaa" stroke-width="1.3"/>
 <path d="M1880 1060 H1896 Q1893 1057 1893 1052 Q1893 1045 1887 1044 Q1881 1045 1881 1052 Q1881 1057 1880 1060 Z M1885 1062 Q1887 1065 1889 1062" fill="none" stroke="#fff" stroke-width="1.5"/>
 <text x="1890" y="1043" font-family="Liberation Sans" font-weight="700" font-size="7" fill="#fff">z</text>
 <text x="1885" y="1055" font-family="Liberation Sans" font-weight="700" font-size="6" fill="#fff">z</text>
</svg>
<!-- acrobat floating icon -->
<div class="a" style="left:1853px;top:950.5px;width:29px;height:29px;background:#dca4a8;border-radius:4px"></div>
<svg width="29" height="29" style="left:1853px;top:950.5px" viewBox="0 0 29 29">
 <path d="M7 21 Q9 15 14 10 Q15 6 14 5 Q12.5 6 13.5 11 Q16 17 22 18 Q24 18 23.5 16.5 Q20 15 14 17 Q8 19 7 21 Z" fill="none" stroke="#fff" stroke-width="1.4"/>
</svg>
<svg width="12" height="8" style="left:1900px;top:999px" viewBox="0 0 12 8"><path d="M1 1 H11 L6 7 Z" fill="#7a7a7a"/></svg>

<div class="t" style="left:60.0px;top:1034.6px;font:400 14.3px 'Liberation Sans',sans-serif;line-height:1;transform:scaleX(0.9471);transform-origin:0 0;color:#ffffff">82°F</div>
<div class="t" style="left:59.0px;top:1053.9px;font:400 14.3px 'Liberation Sans',sans-serif;line-height:1;transform:scaleX(1.0091);transform-origin:0 0;color:#d6d6d6">Heavy rain</div>
<div class="t" style="left:557.0px;top:1043.5px;font:400 16.2px 'Liberation Sans',sans-serif;line-height:1;transform:scaleX(0.9545);transform-origin:0 0;color:#5c5c5c">Search</div>
<div class="t" style="left:1807.5px;top:1034.1px;font:400 14.6px 'Liberation Sans',sans-serif;line-height:1;transform:scaleX(0.9750);transform-origin:0 0;color:#ffffff">12:41 PM</div>
<div class="t" style="left:1801.4px;top:1053.8px;font:400 14.6px 'Liberation Sans',sans-serif;line-height:1;transform:scaleX(1.0215);transform-origin:0 0;color:#ffffff">9/16/2025</div>

<!-- ZOOM PANEL -->
<div id="zoom" class="a"></div>
<svg width="224" height="756" style="left:1696px;top:0" viewBox="1696 0 224 756">
 <defs>
  <linearGradient id="wall1" x1="0" y1="0" x2="1" y2="0"><stop offset="0" stop-color="#cdcfcd"/><stop offset="0.6" stop-color="#dadad8"/><stop offset="1" stop-color="#d6d6d4"/></linearGradient>
  <linearGradient id="door1" x1="0" y1="0" x2="0" y2="1"><stop offset="0" stop-color="#c9cfcc"/><stop offset="1" stop-color="#98a49f"/></linearGradient>
  <linearGradient id="ceil" x1="0" y1="0" x2="1" y2="1"><stop offset="0" stop-color="#9c9c9e"/><stop offset="0.5" stop-color="#9a9a9c"/><stop offset="1" stop-color="#8e8e90"/></linearGradient>
  <linearGradient id="poster" x1="0" y1="0" x2="1" y2="1"><stop offset="0" stop-color="#ececee"/><stop offset="1" stop-color="#e2e2e6"/></linearGradient>
  <radialGradient id="shieldg" cx="0.5" cy="0.4" r="0.6"><stop offset="0" stop-color="#8fd45a"/><stop offset="1" stop-color="#5aaa3a"/></radialGradient>
  <clipPath id="circ"><circle cx="1867.5" cy="440.7" r="38.7"/></clipPath>
  <clipPath id="t1"><rect x="1696" y="126" width="224" height="126"/></clipPath>
  <clipPath id="t3"><rect x="1696" y="378" width="224" height="126"/></clipPath>
  <clipPath id="t5"><rect x="1744" y="630" width="126" height="126"/></clipPath>
 </defs>
 <!-- tile 1 -->
 <g clip-path="url(#t1)">
  <rect x="1696" y="126" width="224" height="126" fill="url(#wall1)"/>
  <rect x="1696" y="126" width="24" height="126" fill="url(#door1)"/>
  <rect x="1718" y="126" width="3" height="126" fill="#e2e4e2"/>
  <rect x="1787" y="127" width="27" height="23" fill="#2a2826"/><rect x="1789" y="129" width="23" height="19" fill="#c4c4c0"/><rect x="1791" y="131" width="19" height="15" fill="#8a8884"/>
  <rect x="1835" y="126" width="29" height="24" fill="#3a3a36"/><rect x="1837" y="128" width="25" height="20" fill="#77776f"/>
  <rect x="1892" y="126" width="28" height="14" fill="#2a2826"/><rect x="1894" y="127" width="26" height="10" fill="#c4c4c0"/>
  <!-- man 1 -->
  <path d="M1696 226 Q1712 216 1730 218 Q1756 216 1768 228 L1774 252 H1696 Z" fill="#d2d6da"/>
  <ellipse cx="1737" cy="202" rx="12" ry="14" fill="#6a5a4e"/>
  <path d="M1722 194 Q1721 180 1736 179 Q1750 179 1748 192 Q1736 188 1722 194 Z" fill="#eaeaea"/>
  <path d="M1727 208 Q1738 226 1751 206 Q1752 224 1739 232 Q1726 226 1727 208 Z" fill="#e4e4e4"/>
  <rect x="1727" y="199" width="21" height="3" fill="#3a3a3a" opacity="0.5"/>
  <!-- chair -->
  <path d="M1784 252 V232 Q1784 225 1792 225 H1860 V252 Z" fill="#2e2e2e"/>
  <!-- man 2 -->
  <path d="M1892 162 Q1900 152 1920 151 V178 H1893 Z" fill="#1c1818"/>
  <path d="M1895 176 H1920 V222 Q1906 222 1900 212 Q1893 200 1893 192 Q1890 188 1895 176 Z" fill="#4e3c34"/>
  <path d="M1893 183 H1920" stroke="#6a6060" stroke-width="1"/>
  <path d="M1878 252 Q1884 232 1900 222 Q1910 218 1920 218 V252 Z" fill="#2e2420"/>
  <path d="M1852 183 Q1856 180 1860 190 L1866 203 Q1876 206 1877 216 Q1876 230 1874 240 V252 H1860 Q1858 238 1852 224 Q1848 210 1852 205 Z" fill="#5c443a"/>
  <path d="M1882 224 Q1892 218 1902 230 Q1912 238 1920 236 V252 H1884 Q1880 240 1882 224 Z" fill="#4a3830"/>
 </g>
 <!-- tile 2 -->
 <rect x="1760" y="252" width="94" height="126" fill="url(#ceil)"/>
 <path d="M1760 252 H1785 L1770 300 L1760 330 Z" fill="#88888a" opacity="0.5"/>
 <path d="M1760 330 Q1775 345 1800 378 H1760 Z" fill="#d4d4d4"/>
 <path d="M1830 378 Q1836 360 1854 350 V378 Z" fill="#c4c4c4"/>
 <circle cx="1848" cy="369" r="7" fill="#d8d8d8"/><circle cx="1850" cy="372" r="4" fill="#6a5a50"/>
 <path d="M1769 252 H1789 L1776 260 Z" fill="#f4f4f4"/>
 <path d="M1825 326 L1839 316 L1849 328 L1835 338 Z" fill="#f8f8f8"/>
 <path d="M1805 297 L1836 290 M1805 297 L1797 326 M1805 297 L1788 288" stroke="#9a928a" stroke-width="3.2" fill="none" stroke-linecap="round"/>
 <circle cx="1805" cy="297" r="3.5" fill="#a09890"/>
 <!-- tile 3 -->
 <g clip-path="url(#t3)">
  <rect x="1696" y="378" width="224" height="126" fill="url(#poster)"/>
  <path d="M1838 378 H1862 L1920 430 V450 Z" fill="#9e9ea0"/>
  <path d="M1861 378 H1878 L1920 418 V434 Z" fill="#d8dde0"/>
  <path d="M1860 378 H1888 L1920 408 V430 Z" fill="#e6c63c"/>
  <path d="M1890 378 H1916 L1920 382 V404 Z" fill="#f0f0f0"/>
  <path d="M1892 378 H1920 V440 L1905 420 Z" fill="#1e9aaa" opacity="0.0"/>
  <path d="M1895 378 H1920 V404 Z" fill="#2a9eae"/>
  <path d="M1908 430 L1920 440 V470 L1908 456 Z" fill="#2a9eae"/>
  <circle cx="1867.5" cy="440.7" r="42" fill="#cfd0d4" opacity="0.7"/>
  <g clip-path="url(#circ)">
   <rect x="1826" y="399" width="84" height="84" fill="#e2e3e6"/>
   <rect x="1848.5" y="401" width="3.2" height="60" fill="#6e6e70"/>
   <path d="M1852 482 V448 Q1856 434 1866 432 H1882 Q1892 434 1896 448 V482 Z" fill="#eeeef0"/>
   <path d="M1867 436 L1869 457 M1878 436 L1870 457" stroke="#4a6ab8" stroke-width="1.6"/>
   <rect x="1867.5" y="451" width="4" height="6" fill="#3a5ab8"/>
   <ellipse cx="1873.5" cy="421" rx="7.5" ry="9.5" fill="#8a6450"/>
   <path d="M1865 417 Q1865 408 1874 408 Q1883 408 1883 417 Q1878 412 1866 416 Z" fill="#2a2020"/>
   <path d="M1868 427 Q1873.5 432 1880 427 Q1879 431 1873.5 432 Q1868 431 1868 427 Z" fill="#3a2a24"/>
   <path d="M1842 467 Q1846 448 1857 440" stroke="#333" stroke-width="1.1" fill="none"/>
   <circle cx="1857.5" cy="440" r="1.8" fill="#222"/>
   <path d="M1836 483 V466 H1892 V483 Z" fill="#1f6b3c"/>
  </g>
 </g>
 <text x="1696" y="420.5" font-family="Liberation Sans" font-weight="700" font-size="13" fill="#111" textLength="90" lengthAdjust="spacingAndGlyphs">POWER OF LATEX</text>
 <text x="1696" y="404" font-family="Liberation Serif" font-style="italic" font-size="6.5" fill="#555" textLength="66" lengthAdjust="spacingAndGlyphs">Effortless Typesetting with</text>
 <text x="1696" y="431" font-family="Liberation Sans" font-size="4.5" fill="#666" textLength="33">Keynote Speaker</text>
 <text x="1696" y="439" font-family="Liberation Sans" font-weight="700" font-size="6" fill="#222" textLength="45">Md. Istiac Ahmed</text>
 <text x="1696" y="447" font-family="Liberation Sans" font-size="4.5" fill="#555" textLength="52">Lecturer, Department of EEE</text>
 <text x="1696" y="452" font-family="Liberation Sans" font-size="4.5" fill="#555" textLength="57">Green University of Bangladesh</text>
 <text x="1697" y="465" font-family="Liberation Sans" font-weight="700" font-size="4.8" fill="#222" textLength="37">4 September 2025</text>
 <text x="1697" y="471.5" font-family="Liberation Sans" font-weight="700" font-size="4.8" fill="#222" textLength="18">12:00 AM</text>
 <rect x="1697" y="477" width="17" height="8" fill="#555" opacity="0.6"/>
 <text x="1795" y="494" font-family="Liberation Sans" font-weight="700" font-size="3.5" fill="#444" textLength="21">Organized by</text>
 <text x="1772" y="499" font-family="Liberation Sans" font-weight="700" font-size="3.5" fill="#444" textLength="78">Department of EEE, Green University of Bangladesh</text>
 <!-- tile 4 -->
 <rect x="1744" y="504" width="126" height="126" fill="#ffffff"/>
 <path d="M1744 608 Q1764 596 1788 591 L1806 630 H1744 Z" fill="#1a1a1c"/>
 <path d="M1870 606 Q1852 596 1830 591 L1812 630 H1870 Z" fill="#1a1a1c"/>
 <path d="M1787 592 Q1808 604 1832 592 L1830 630 H1788 Z" fill="#f2f4f8"/>
 <path d="M1792 590 L1808 612 L1826 590 Z" fill="#c49a80"/>
 <ellipse cx="1777" cy="563" rx="3.5" ry="7" fill="#c89c80"/><ellipse cx="1838" cy="563" rx="3.5" ry="7" fill="#c89c80"/>
 <path d="M1778.5 542 Q1778 600 1807 603 Q1835 600 1834.5 542 Q1834 527 1807 526 Q1780 527 1778.5 542 Z" fill="#cca488"/>
 <path d="M1782 580 Q1785 600 1807 603 Q1830 600 1833 580 Q1830 596 1807 599 Q1786 596 1782 580 Z" fill="#3a2a22"/>
 <path d="M1775 556 Q1770 512 1806 511.5 Q1842 512 1838.5 556 Q1836 540 1832 534 Q1810 528 1784 534 Q1779 542 1775 556 Z" fill="#151314"/>
 <path d="M1780 559 H1834" stroke="#5a5a5a" stroke-width="1"/>
 <rect x="1784" y="558" width="19" height="8" rx="2" fill="none" stroke="#6a6460" stroke-width="0.9"/>
 <rect x="1811" y="558" width="19" height="8" rx="2" fill="none" stroke="#6a6460" stroke-width="0.9"/>
 <ellipse cx="1794" cy="562" rx="3" ry="1.5" fill="#3a2a24"/><ellipse cx="1820" cy="562" rx="3" ry="1.5" fill="#3a2a24"/>
 <path d="M1794 583.5 Q1807 578 1821 583.5" stroke="#2a1a14" stroke-width="2.6" fill="none"/>
 <!-- tile 5 -->
 <g clip-path="url(#t5)">
  <rect x="1744" y="630" width="126" height="126" fill="#ffffff"/>
  <path d="M1767 650 Q1756 690 1770 712 Q1782 728 1805 733" stroke="#f0d84a" stroke-width="6" fill="none" stroke-dasharray="3.5 1.2"/>
  <path d="M1848 650 Q1859 690 1845 712 Q1833 728 1810 733" stroke="#f0d84a" stroke-width="6" fill="none" stroke-dasharray="3.5 1.2"/>
  <path d="M1747 712 L1764 700 L1770 718 Q1790 745 1807 746 Q1826 745 1845 718 L1851 700 L1869 712 L1860 722 L1866 740 Q1838 758 1807 758 Q1776 758 1750 740 L1756 722 Z" fill="#7cc645"/>
  <path d="M1753 718 L1766 716 L1768 732 L1756 734 Z M1862 718 L1849 716 L1847 732 L1859 734 Z" fill="#1e9a48"/>
  <path d="M1774 657.5 Q1790 652 1807 650 Q1824 652 1839.5 657.5 V700 Q1836 718 1807 729 Q1778 718 1774 700 Z" fill="#7ac843"/>
  <rect x="1799.5" y="652" width="15.5" height="50" fill="#6ab83a"/>
  <rect x="1803" y="652" width="6" height="50" fill="#b8d858"/>
  <path d="M1799.5 700 H1815 V712 L1807.5 726 L1799.5 712 Z" fill="#f0b030"/>
  <rect x="1799" y="648.5" width="16.5" height="3.5" fill="#1e7a3a"/>
  <path d="M1800.5 648 Q1799 638 1806 632 Q1808 638 1811 636 Q1816 642 1814 648 Z" fill="#f08a2a"/>
  <path d="M1804 647 Q1804 640 1807 637 Q1811 642 1810 647 Z" fill="#ffd04a"/>
  <path d="M1777 683 L1790 679 L1799 684 L1788 688 Z M1782 690 L1797 684" stroke="#ffffff" stroke-width="1.6" fill="#ffffff"/>
  <path d="M1818 690 V682 Q1820 678 1822 684 Q1824 676 1827 684 Q1830 676 1832 684 Q1834 678 1836 682 V690 Z" fill="#ffffff"/>
  <text x="1835" y="752" font-family="Liberation Sans" font-weight="700" font-size="9" fill="#ffffff" transform="rotate(-12 1835 752)">ersity</text>
 </g>
 <!-- name labels -->
 <rect x="1697" y="230" width="129" height="21" rx="4" fill="#1c1c1c" opacity="0.74"/>
 <rect x="1697" y="356" width="95" height="21" rx="4" fill="#1c1c1c" opacity="0.74"/>
 <rect x="1697" y="482" width="82" height="21" rx="4" fill="#1c1c1c" opacity="0.74"/>
 <rect x="1697" y="735" width="134" height="20" rx="4" fill="#1c1c1c" opacity="0.74"/>
</svg>
<div class="t" style="left:1741.7px;top:53.6px;font:700 14.3px 'Liberation Sans',sans-serif;line-height:1;transform:scaleX(0.8851);transform-origin:0 0;color:#ffffff">BdREN</div>
<div class="t" style="left:1792.0px;top:53.6px;font:700 14.3px 'Liberation Sans',sans-serif;line-height:1;transform:scaleX(0.8945);transform-origin:0 0;color:#ffffff">vSession</div>
<div class="t" style="left:1853.6px;top:53.6px;font:700 14.3px 'Liberation Sans',sans-serif;line-height:1;transform:scaleX(1.0494);transform-origin:0 0;color:#ffffff">h...</div>
<div class="t" style="left:1699.3px;top:234.6px;font:400 12.6px 'Liberation Sans',sans-serif;line-height:1;transform:scaleX(1.0564);transform-origin:0 0;color:#ffffff">Dr. Md. Hasan Maruf</div>
<div class="t" style="left:1699.2px;top:360.5px;font:400 12.6px 'Liberation Sans',sans-serif;line-height:1;transform:scaleX(1.0136);transform-origin:0 0;color:#ffffff">Parvez Khosru</div>
<div class="t" style="left:1699.2px;top:486.2px;font:400 12.6px 'Liberation Sans',sans-serif;line-height:1;transform:scaleX(1.0224);transform-origin:0 0;color:#ffffff">Istiac Ahmed</div>
<div class="t" style="left:1699.4px;top:613.3px;font:400 12.6px 'Liberation Sans',sans-serif;line-height:1;transform:scaleX(0.8816);transform-origin:0 0;color:#ffffff">EEE_TAKVIR</div>
<div class="t" style="left:1699.3px;top:738.8px;font:400 12.6px 'Liberation Sans',sans-serif;line-height:1;transform:scaleX(1.0366);transform-origin:0 0;color:#ffffff">Dr. Md. Ahsanul Alam</div>

</body></html>
